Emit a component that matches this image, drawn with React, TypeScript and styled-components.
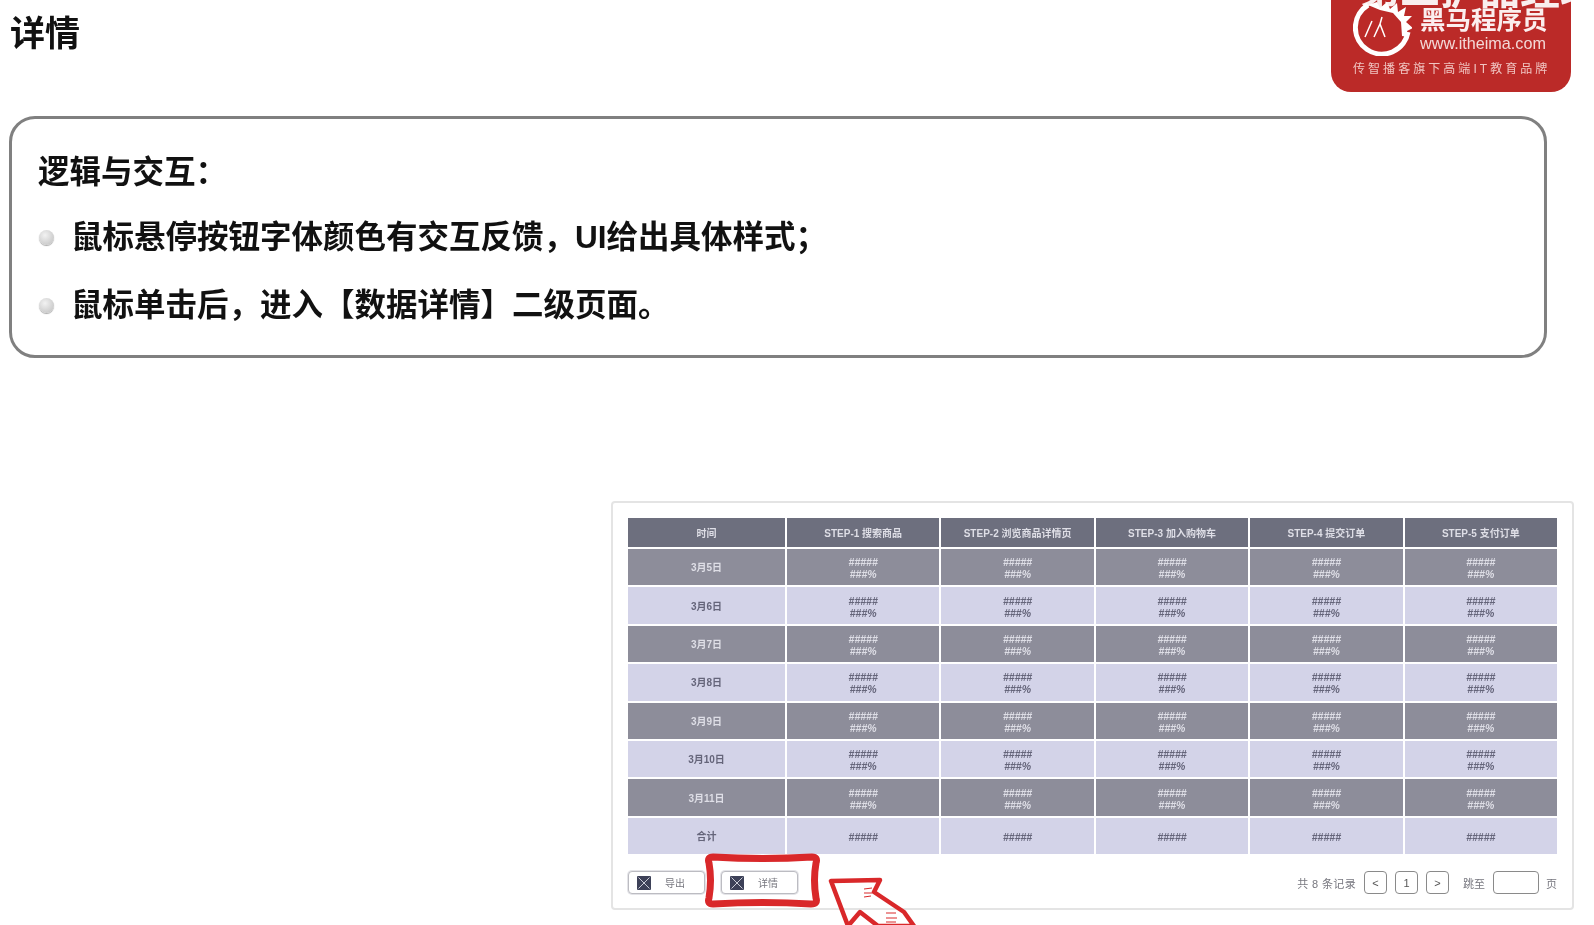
import React from "react";
import styled, { createGlobalStyle } from "styled-components";

const FONT = `"Liberation Sans", "Noto Sans CJK SC", sans-serif`;

const Global = createGlobalStyle`
  html, body { margin: 0; padding: 0; background: #fff; }
  body { font-family: ${FONT}; }
`;

const Page = styled.div`
  width: 1594px;
  height: 925px;
  position: relative;
  overflow: hidden;
  display: flex;
  flex-direction: column;
  background: #fff;
`;

const Header = styled.header`
  height: 116px;
  display: flex;
  justify-content: space-between;
  align-items: flex-start;
  padding: 0 23px 0 10px;
`;

const Title = styled.h1`
  margin: 0;
  font-size: 35px;
  line-height: 67px;
  font-weight: 700;
  color: #111;
  filter: blur(0.4px);
`;

const Logo = styled.div`
  width: 240px;
  height: 92px;
  box-sizing: border-box;
  background: #bb2a28;
  border-radius: 0 0 20px 20px;
  color: #fff;
  display: flex;
  flex-direction: column;
  padding: 0 0 0 22px;
  filter: blur(0.4px);
`;

const LogoTop = styled.div`
  display: flex;
  gap: 8px;
  height: 56px;
`;

const LogoMark = styled.svg`
  width: 59px;
  height: 56px;
  flex: none;
`;

const LogoText = styled.div`
  display: flex;
  flex-direction: column;
  width: 130px;
`;

const LogoName = styled.div`
  font-size: 25.5px;
  line-height: 26px;
  margin-top: 7px;
  font-weight: 700;
  white-space: nowrap;
  color: #fbeeee;
`;

const LogoUrl = styled.div`
  font-family: "Liberation Sans", sans-serif;
  font-size: 16.2px;
  line-height: 18px;
  margin-top: 1px;
  white-space: nowrap;
  color: #f3d9d7;
`;

const LogoSlogan = styled.div`
  font-size: 12px;
  line-height: 16px;
  margin-top: 5px;
  letter-spacing: 3.05px;
  white-space: nowrap;
  color: #f0c4c1;
`;

const Caption = styled.div`
  position: absolute;
  left: 1360px;
  top: -32px;
  font-size: 40px;
  line-height: 44px;
  font-weight: 700;
  color: #fff;
  opacity: 0.92;
  white-space: nowrap;
  filter: blur(0.5px);
`;

const RuleBox = styled.section`
  width: 1538px;
  height: 242px;
  margin-left: 9px;
  box-sizing: border-box;
  border: 3px solid #808080;
  border-radius: 26px;
  padding: 31px 0 0 26px;
  color: #111;
`;

const RuleTitle = styled.h2`
  margin: 0 0 21px;
  font-size: 31.5px;
  line-height: 44px;
  font-weight: 700;
  filter: blur(0.4px);
`;

const RuleList = styled.ul`
  margin: 0;
  padding: 0;
  list-style: none;
  display: flex;
  flex-direction: column;
  gap: 24px;
`;

const RuleItem = styled.li`
  display: flex;
  align-items: center;
  gap: 17px;
  font-size: 31.5px;
  line-height: 44px;
  font-weight: 700;
  filter: blur(0.4px);
`;

const Dot = styled.span`
  width: 15px;
  height: 15px;
  flex: none;
  margin-left: 1px;
  border-radius: 50%;
  background: radial-gradient(circle at 40% 35%, #f2f2f2, #bdbdbd);
  box-shadow: 0 1px 1px #aaa;
`;

const Panel = styled.section`
  position: relative;
  width: 963px;
  height: 409px;
  margin: 143px 0 0 611px;
  box-sizing: border-box;
  border: 2px solid #e4e4e4;
  border-radius: 4px;
  padding: 15px 15px 0 15px;
  display: flex;
  flex-direction: column;
`;

const Table = styled.div`
  display: grid;
  grid-template-columns: 157px repeat(5, 1fr);
  grid-template-rows: 29px repeat(8, 36.4px);
  gap: 2px;
  font-size: 10px;
  filter: blur(0.5px);
`;

const Cell = styled.div<{ $kind: "head" | "dark" | "light" }>`
  display: flex;
  flex-direction: column;
  align-items: center;
  justify-content: center;
  padding-top: 2px;
  box-sizing: border-box;
  line-height: 12px;
  font-weight: 700;
  background: ${(p) =>
    p.$kind === "head" ? "#6d6f7e" : p.$kind === "dark" ? "#8d8d9a" : "#d3d3e8"};
  color: ${(p) => (p.$kind === "light" ? "#65657a" : "#dedee6")};
`;

const HashText = styled.span`
  font-style: italic;
  font-weight: 700;
  font-size: 10.5px;
`;

const Footer = styled.div`
  display: flex;
  align-items: center;
  height: 23px;
  margin-top: 17px;
  font-size: 10px;
  color: #77777f;
  filter: blur(0.3px);
`;

const ActionButton = styled.button`
  width: 77px;
  height: 23px;
  box-sizing: border-box;
  margin-right: 16px;
  padding: 0 0 0 8px;
  background: #fff;
  border: 1px solid #bcbcc2;
  box-shadow: 0 0 0 1px #e4e4e8;
  border-radius: 4px;
  display: flex;
  align-items: center;
  gap: 14px;
  font: inherit;
  color: inherit;
`;

const XIcon = styled.svg`
  width: 14px;
  height: 14px;
  flex: none;
`;

const Pager = styled.div`
  margin-left: auto;
  display: flex;
  align-items: center;
  font-size: 11px;
`;

const Total = styled.span`
  letter-spacing: 0.35px;
`;

const PagerButton = styled.span`
  width: 23px;
  height: 23px;
  box-sizing: border-box;
  margin-left: 8px;
  display: flex;
  align-items: center;
  justify-content: center;
  border: 1px solid #8a8a8a;
  border-radius: 4px;
  color: #555;
`;

const JumpLabel = styled.span`
  margin-left: 14px;
`;

const JumpInput = styled.span`
  width: 46px;
  height: 23px;
  box-sizing: border-box;
  margin: 0 7px 0 8px;
  border: 1px solid #8a8a8a;
  border-radius: 4px;
`;

const Highlight = styled.svg`
  position: absolute;
  left: 92px;
  top: 350px;
  width: 115px;
  height: 55px;
`;

const Arrow = styled.svg`
  position: absolute;
  left: 217px;
  top: 375px;
  width: 100px;
  height: 50px;
  overflow: visible;
`;

const columns = ["时间", "STEP-1 搜索商品", "STEP-2 浏览商品详情页", "STEP-3 加入购物车", "STEP-4 提交订单", "STEP-5 支付订单"];
const days = ["3月5日", "3月6日", "3月7日", "3月8日", "3月9日", "3月10日", "3月11日"];

function Mark() {
  return (
    <XIcon viewBox="0 0 14 14">
      <rect width="14" height="14" rx="1" fill="#3d4158" />
      <path d="M1.5 1.5 12.5 12.5M12.5 1.5 1.5 12.5" stroke="#c9cbd6" strokeWidth="1" />
    </XIcon>
  );
}

export default function App() {
  return (
    <Page>
      <Global />
      <Header>
        <Title>详情</Title>
        <Logo>
          <LogoTop>
            <LogoMark viewBox="0 0 59 56">
              <path d="M15 5A26.5 26.5 0 1 0 55 32" fill="none" stroke="#fff" strokeWidth="5" />
              <path d="M15 5 24 2 27 8 34 2 37 9 44 3 45 12 53 7 51 16 59 16 53 22 60 28 54 31 55 37 49 36 48 22 40 13 27 10 Z" fill="#fff" />
              <path d="M12 37 19 21M21 37 27 24 32 37M27 24 29 17" fill="none" stroke="#fff" strokeWidth="1.5" />
            </LogoMark>
            <LogoText>
              <LogoName>黑马程序员</LogoName>
              <LogoUrl>www.itheima.com</LogoUrl>
            </LogoText>
          </LogoTop>
          <LogoSlogan>传智播客旗下高端IT教育品牌</LogoSlogan>
        </Logo>
      </Header>
      <Caption>第二扩品经理</Caption>
      <RuleBox>
        <RuleTitle>逻辑与交互：</RuleTitle>
        <RuleList>
          <RuleItem><Dot />鼠标悬停按钮字体颜色有交互反馈，UI给出具体样式；</RuleItem>
          <RuleItem><Dot />鼠标单击后，进入【数据详情】二级页面。</RuleItem>
        </RuleList>
      </RuleBox>
      <Panel>
        <Table>
          {columns.map((c) => (
            <Cell key={c} $kind="head">{c}</Cell>
          ))}
          {days.map((d, i) => {
            const kind = i % 2 === 0 ? "dark" : "light";
            return (
              <React.Fragment key={d}>
                <Cell $kind={kind}>{d}</Cell>
                {[0, 1, 2, 3, 4].map((n) => (
                  <Cell key={n} $kind={kind}>
                    <HashText>#####</HashText>
                    <HashText>###%</HashText>
                  </Cell>
                ))}
              </React.Fragment>
            );
          })}
          <Cell $kind="light">合计</Cell>
          {[0, 1, 2, 3, 4].map((n) => (
            <Cell key={n} $kind="light">
              <HashText>#####</HashText>
            </Cell>
          ))}
        </Table>
        <Footer>
          <ActionButton><Mark />导出</ActionButton>
          <ActionButton><Mark />详情</ActionButton>
          <Pager>
            <Total>共 8 条记录</Total>
            <PagerButton>&lt;</PagerButton>
            <PagerButton>1</PagerButton>
            <PagerButton>&gt;</PagerButton>
            <JumpLabel>跳至</JumpLabel>
            <JumpInput />
            <span>页</span>
          </Pager>
        </Footer>
        <Highlight viewBox="0 0 115 55">
          <path
            d="M8 4Q58 7 107 4Q113 4 111 10Q108 27 111 45Q113 51 106 51Q58 48 8 51Q2 51 4 45Q7 27 4 10Q2 4 8 4Z"
            fill="none"
            stroke="#d9282a"
            strokeWidth="7"
          />
        </Highlight>
        <Arrow viewBox="0 0 100 50">
          <path
            d="M1 3 50 2 44 14 74 34 84 48 48 48 30 34 18 48Z"
            fill="none"
            stroke="#d9282a"
            strokeWidth="4.5"
            strokeLinejoin="round"
          />
          <path d="M34 11 42 10M34 15 42 15M34 19 41 18M56 35 66 35M56 40 67 40M56 44 66 44" fill="none" stroke="#d9282a" strokeWidth="1" />
        </Arrow>
      </Panel>
    </Page>
  );
}
